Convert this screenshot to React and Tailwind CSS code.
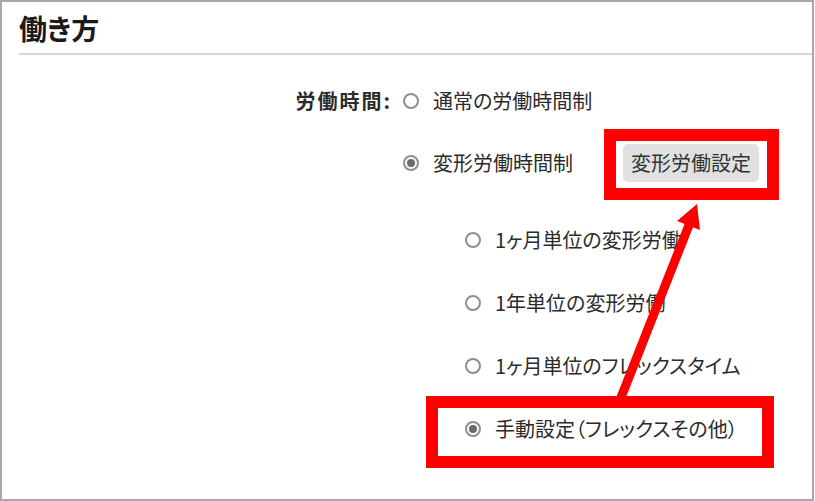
import React from 'react'

function Radio({ checked }) {
  return (
    <span className="flex h-[16px] w-[16px] shrink-0 items-center justify-center rounded-full border-2 border-[#8f8f8f] bg-white">
      {checked && <span className="h-[8px] w-[8px] rounded-full bg-[#6a6a6a]" />}
    </span>
  )
}

function Option({ checked, label }) {
  return (
    <div className="flex h-[40px] items-center gap-[14px]">
      <Radio checked={checked} />
      <span>{label}</span>
    </div>
  )
}

const subOptions = [
  { label: '1ヶ月単位の変形労働' },
  { label: '1年単位の変形労働' },
  { label: '1ヶ月単位のフレックスタイム' },
  { label: '手動設定（フレックスその他）', checked: true },
]

export default function App() {
  return (
    <div className="relative h-[501px] w-[815px] overflow-hidden bg-white font-['Noto_Sans_CJK_JP',sans-serif] text-[#2b2b2b] [font-feature-settings:'palt']">
      <div className="h-[501px] w-[814px] border-2 border-[#a8a8a8]">
        {/* 見出し */}
        <div className="ml-[17px] border-b-2 border-[#d6d6d6] pb-[8px] pt-[9px]">
          <h1 className="text-[28px] font-bold leading-[34px] text-[#1a1a1a]">働き方</h1>
        </div>

        <div className="mt-[26px] flex text-[20px]">
          <div className="flex h-[40px] w-[390px] items-center justify-end font-bold tracking-[2px]">労働時間:</div>
          <div className="ml-[11px] flex flex-col">
            <Option label="通常の労働時間制" />
            <div className="mt-[22px] flex items-center">
              <Option checked label="変形労働時間制" />
              <button className="ml-[50px] h-[38px] rounded-[5px] bg-[#e1e1e1] px-[8px] text-[20px] text-[#333]">
                変形労働設定
              </button>
            </div>
            <div className="ml-[62px] mt-[37px] flex flex-col gap-[23px]">
              {subOptions.map((o, i) => (
                <Option key={i} checked={o.checked} label={o.label} />
              ))}
            </div>
          </div>
        </div>
      </div>

      {/* 注釈 */}
      <div className="absolute left-[604px] top-[129px] h-[71px] w-[175px] border-[12px] border-[#ff0000]" />
      <div className="absolute left-[426px] top-[396px] h-[72px] w-[348px] border-[12px] border-[#ff0000]" />
      <svg className="absolute left-0 top-0" width="815" height="501" viewBox="0 0 815 501">
        <line x1="620" y1="400" x2="689" y2="225" stroke="#ff0000" strokeWidth="9" />
        <polygon points="697,204 700,230 677,221" fill="#ff0000" />
      </svg>
    </div>
  )
}
